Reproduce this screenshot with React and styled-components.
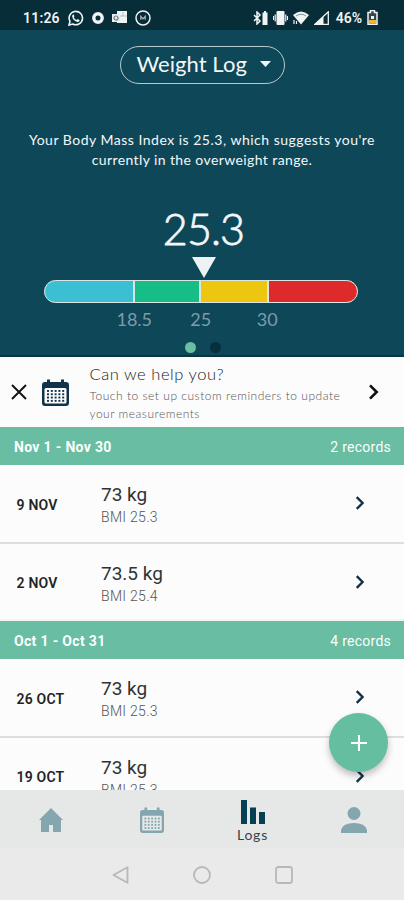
import React from 'react';
import styled, { createGlobalStyle } from 'styled-components';

const GlobalStyle = createGlobalStyle`
  * { box-sizing: border-box; }
  body { margin: 0; background: #fcfcfc; font-family: Roboto, sans-serif; }
  button { font: inherit; color: inherit; background: none; border: 0; padding: 0; }
  svg { display: block; flex: none; }
`;

const Screen = styled.div`
  width: 404px;
  height: 900px;
  display: flex;
  flex-direction: column;
  overflow: hidden;
  position: relative;
  background: #fcfcfc;
`;

const StatusBar = styled.div`
  height: 30px;
  flex: none;
  display: flex;
  align-items: center;
  justify-content: space-between;
  padding: 5px 26px 0 23px;
  background: #062d38;
  color: #f1f4f5;
  font-size: 14px;
  font-weight: 600;
`;

const StatusGroup = styled.div`
  display: flex;
  align-items: center;
  gap: ${(p) => p.$gap}px;
`;

const StatusText = styled.span`
  letter-spacing: ${(p) => p.$spacing || 0}px;
  margin-left: ${(p) => p.$left || 0}px;
  line-height: 16px;
`;

const Hero = styled.header`
  height: 327px;
  flex: none;
  display: flex;
  flex-direction: column;
  align-items: center;
  background: #0e4858;
  border-bottom: 2px solid #073746;
  color: #f4f7f8;
  font-family: Lato, sans-serif;
`;

const LogPicker = styled.button`
  width: 165px;
  height: 38px;
  margin-top: 15.5px;
  padding: 0 13px 2px 16px;
  display: flex;
  align-items: center;
  justify-content: space-between;
  border: 1px solid #b9c9cf;
  border-radius: 19px;
  font-size: 22px;
  letter-spacing: 0.05px;
  line-height: 26px;
  white-space: nowrap;
`;

const Summary = styled.div`
  margin-top: 46.5px;
  font-size: 14px;
  line-height: 20px;
  text-align: center;
  white-space: nowrap;
`;

const SummaryLine = styled.p`
  margin: 0;
  letter-spacing: ${(p) => p.$spacing}px;
`;

const Score = styled.div`
  margin: 32px 0 0 3px;
  height: 54px;
  line-height: 54px;
  font-size: 43px;
  font-weight: 300;
  -webkit-text-stroke: 0.8px currentColor;
  letter-spacing: -0.9px;
`;

const Marker = styled.svg`
  margin: 1px 0 0 4px;
`;

const Gauge = styled.div`
  width: 314px;
  height: 23px;
  margin: 2px 0 0 -3px;
  display: grid;
  grid-template-columns: 88px 64px 66px 1fr;
  gap: 2px;
  overflow: hidden;
  border: 1.5px solid #dbe5e2;
  border-radius: 12px;
  background: #dbe5e2;
`;

const Segment = styled.div`
  background: ${(p) => p.$color};
`;

const Scale = styled.div`
  width: 199px;
  margin: 5px 0 0 -3px;
  display: grid;
  grid-template-columns: repeat(3, 66.5px);
  text-align: center;
  color: #7e9ba8;
  font-size: 18px;
  line-height: 22px;
`;

const Dots = styled.div`
  display: flex;
  gap: 14px;
  margin: 11.5px 0 0 1px;
`;

const Dot = styled.span`
  width: 11px;
  height: 11px;
  border-radius: 50%;
  background: ${(p) => (p.$active ? '#68bfa2' : '#06303c')};
`;

const HelpCard = styled.section`
  height: 70px;
  flex: none;
  display: flex;
  align-items: center;
  padding: 0 24px 0 11px;
`;

const HelpCopy = styled.div`
  margin: 2px 0 0 20.5px;
  flex: 1;
  white-space: nowrap;
  font-family: Lato, sans-serif;
`;

const HelpTitle = styled.h2`
  margin: 0 0 3px;
  font-size: 16.5px;
  line-height: 20px;
  font-weight: 300;
  letter-spacing: 0.55px;
  color: #222;
`;

const HelpText = styled.p`
  margin: 0;
  font-size: 12px;
  line-height: 18px;
  font-weight: 300;
  letter-spacing: 0.52px;
  color: #555;
`;

const Records = styled.main`
  flex: 1;
  min-height: 0;
  overflow: hidden;
`;

const MonthHeader = styled.div`
  height: 38px;
  display: flex;
  align-items: center;
  justify-content: space-between;
  padding: 1px 13px 0 14px;
  background: #68bda2;
  color: #fbfffd;
  font-size: 14px;
`;

const MonthRange = styled.span`
  font-weight: 700;
  letter-spacing: 0.33px;
`;

const RecordCount = styled.span`
  letter-spacing: 0.25px;
`;

const RecordRow = styled.div`
  height: ${(p) => (p.$last ? 77 : 79)}px;
  display: grid;
  grid-template-columns: 84.5px 1fr 11px;
  align-items: center;
  padding: ${(p) => (p.$last ? 2 : 1)}px 38px 0 16.5px;
  border-bottom: 2px solid ${(p) => (p.$last ? '#f0f4f2' : '#dedede')};
  > svg { margin-bottom: 1.5px; }
`;

const RecordDate = styled.div`
  padding-top: 1px;
  font-size: 14px;
  font-weight: 600;
  letter-spacing: 0.2px;
  color: #1f2426;
`;

const Weight = styled.div`
  margin-top: 3px;
  font-size: 19px;
  line-height: 24px;
  color: #303335;
`;

const Bmi = styled.div`
  font-size: 14px;
  line-height: 21px;
  font-weight: 300;
  letter-spacing: 0.3px;
  color: #555;
`;

const TabBar = styled.nav`
  height: 58px;
  flex: none;
  display: grid;
  grid-template-columns: repeat(4, 1fr);
  background: #e6e7e7;
`;

const Tab = styled.button`
  display: flex;
  flex-direction: column;
  align-items: center;
  padding-top: ${(p) => p.$top}px;
  color: ${(p) => (p.$active ? '#073f52' : '#84a7af')};
`;

const TabLabel = styled.span`
  margin-top: 3px;
  font: 400 14px/16px Lato, sans-serif;
  letter-spacing: 0.8px;
  color: #35444a;
`;

const SystemBar = styled.div`
  height: 52px;
  flex: none;
  display: flex;
  align-items: center;
  justify-content: center;
  gap: 64px;
  padding: 2px 0 0;
  background: #eaeaea;
`;

const AddButton = styled.button`
  position: absolute;
  left: 329px;
  top: 713px;
  width: 59px;
  height: 59px;
  display: grid;
  place-items: center;
  border-radius: 50%;
  background: #66bea1;
  box-shadow: 0 4px 7px rgba(0, 0, 0, 0.25);
`;

const Chevron = ({ size = 14, color = '#103047' }) => (
  <svg width={size * 0.75} height={size} viewBox="0 0 9 12" fill="none" stroke={color} strokeWidth="2">
    <path d="M1.5 1l5 5-5 5" />
  </svg>
);

const CalendarIcon = ({ size, width = size, paper }) => (
  <svg width={width} height={size} viewBox="0 0 27 27" preserveAspectRatio="none">
    <path d="M3 3h2V.5h3V3h11V.5h3V3h2q3 0 3 3v18q0 3-3 3H3q-3 0-3-3V6q0-3 3-3z" fill="currentColor" />
    <rect x="2.5" y="9" width="22" height="15.500" rx="1.500" fill={paper} />
    <g fill="currentColor">
      {[11, 14.3, 17.600, 20.900].map((y) =>
        [5, 8.8, 12.600, 16.400, 20.200].map((x) => <rect key={`${x}-${y}`} x={x} y={y} width="2" height="1.900" />)
      )}
    </g>
  </svg>
);

const DarkIcon = styled.div`
  color: #12324a;
  margin: 0 0 0 15px;
`;

const StatusLeftIcons = () => (
  <>
    <svg width="16" height="16" viewBox="0 0 16 16" fill="none" stroke="currentColor">
      <path d="M1 15l1-3.600A6.700 6.700 0 1 1 4.700 14z" strokeWidth="1.600" />
      <path d="M5.400 4.200l1.100 2-.7 1c.6 1.300 1.500 2.200 2.900 2.800l1-.9 2 1.100c-.3 1.600-1.500 2-3 1.500C6.200 10.900 4.500 9 4.200 6.600c-.1-1 .3-2 1.200-2.400z" fill="currentColor" stroke="none" />
    </svg>
    <svg width="12" height="12" viewBox="0 0 12 12"><circle cx="6" cy="6" r="4.200" fill="none" stroke="currentColor" strokeWidth="3.400" /></svg>
    <svg width="15" height="13" viewBox="0 0 15 13">
      <path d="M5 0h10v12H5z" fill="currentColor" />
      <path d="M8 5h7M11 1v4" fill="none" stroke="#b5c0c5" />
      <path d="M0 3h8v8H0z" fill="#e8edef" />
      <circle cx="4" cy="7" r="2" fill="none" stroke="#6d7e86" strokeWidth="1.200" />
    </svg>
    <svg width="16" height="16" viewBox="0 0 16 16" fill="none" stroke="currentColor">
      <circle cx="8" cy="8" r="7" strokeWidth="1.500" />
      <path d="M5.800 9.800V6.300L8 8.800l2.200-2.500v3.500" strokeWidth="1.200" opacity=".7" />
    </svg>
  </>
);

const StatusRightIcons = () => (
  <>
    <svg width="15" height="14" viewBox="0 0 15 14">
      <path d="M1 4l6 6-3 3V1l3 3-6 6" fill="none" stroke="currentColor" strokeWidth="1.500" />
      <path d="M9.500 1.500H11V0h2v1.500h1.500V14h-5z" fill="currentColor" />
    </svg>
    <svg width="15" height="14" viewBox="0 0 15 14" fill="currentColor">
      <rect x="3.500" y="0" width="8" height="14" rx="1" />
      <path d="M0 5h1v4H0zM1.600 3.500h1.200v7H1.600zM12.200 3.500h1.200v7h-1.200zM14 5h1v4h-1z" />
    </svg>
    <svg width="16" height="14" viewBox="0 0 16 14">
      <path d="M0 4q8-7 16 0L8 13.500z" fill="currentColor" />
      <path d="M3 5q5-3.500 10 0" stroke="#062d38" fill="none" opacity=".5" />
      <path d="M1 9v4M3.500 10v3" stroke="currentColor" strokeWidth="1.200" />
    </svg>
    <svg width="15" height="14" viewBox="0 0 15 14">
      <path d="M1 13.300L14.300.8v12.500z" fill="none" stroke="currentColor" strokeWidth="1.300" />
      <path d="M1 13.300L9.500 5.500v7.800z" fill="currentColor" />
    </svg>
  </>
);

const Row = ({ date, weight, bmi, last }) => (
  <RecordRow $last={last}>
    <RecordDate>{date}</RecordDate>
    <div>
      <Weight>{weight}</Weight>
      <Bmi>BMI {bmi}</Bmi>
    </div>
    <Chevron />
  </RecordRow>
);

const months = [
  { range: 'Nov 1 - Nov 30', count: 2, rows: [['9 NOV', '73 kg', '25.3'], ['2 NOV', '73.5 kg', '25.4']] },
  { range: 'Oct 1 - Oct 31', count: 4, rows: [['26 OCT', '73 kg', '25.3'], ['19 OCT', '73 kg', '25.3']] },
];

export default function App() {
  return (
    <Screen>
      <GlobalStyle />
      <StatusBar>
        <StatusGroup $gap={8}>
          <StatusText $spacing={0.2}>11:26</StatusText>
          <StatusLeftIcons />
        </StatusGroup>
        <StatusGroup $gap={5}>
          <StatusRightIcons />
          <StatusText $left={2}>46%</StatusText>
          <svg width="11" height="15" viewBox="0 0 11 15">
            <path d="M1 2.500h2.500v-2h4v2H10v11.700H1z" fill="#35454b" stroke="currentColor" strokeWidth="1.500" />
            <path d="M2 10h7v3.500H2z" fill="#eeb82c" />
            <path d="M4 6h3v3H4z" fill="currentColor" />
          </svg>
        </StatusGroup>
      </StatusBar>

      <Hero>
        <LogPicker>
          Weight Log
          <svg width="11" height="6" viewBox="0 0 11 6"><path d="M0 0h11L5.500 6z" fill="currentColor" /></svg>
        </LogPicker>
        <Summary>
          <SummaryLine $spacing={0.5}>Your Body Mass Index is 25.3, which suggests you're</SummaryLine>
          <SummaryLine $spacing={0.4}>currently in the overweight range.</SummaryLine>
        </Summary>
        <Score>25.3</Score>
        <Marker width="24" height="21" viewBox="0 0 24 21"><path d="M0 0h24L12 21z" fill="#edf2f3" /></Marker>
        <Gauge>
          <Segment $color="#3bbfd3" />
          <Segment $color="#17bd86" />
          <Segment $color="#edc70f" />
          <Segment $color="#df2a2b" />
        </Gauge>
        <Scale><span>18.5</span><span>25</span><span>30</span></Scale>
        <Dots><Dot $active /><Dot /></Dots>
      </Hero>

      <HelpCard>
        <svg width="16" height="16" viewBox="0 0 16 16" stroke="#111" strokeWidth="1.900"><path d="M1 1l14 14M15 1L1 15" /></svg>
        <DarkIcon><CalendarIcon size={27} paper="#fcfcfc" /></DarkIcon>
        <HelpCopy>
          <HelpTitle>Can we help you?</HelpTitle>
          <HelpText>Touch to set up custom reminders to update<br />your measurements</HelpText>
        </HelpCopy>
        <Chevron size={16} color="#111" />
      </HelpCard>

      <Records>
        {months.map((m) => (
          <section key={m.range}>
            <MonthHeader><MonthRange>{m.range}</MonthRange><RecordCount>{m.count} records</RecordCount></MonthHeader>
            {m.rows.map(([date, weight, bmi], i) => (
              <Row key={date} date={date} weight={weight} bmi={bmi} last={i === m.rows.length - 1} />
            ))}
          </section>
        ))}
      </Records>

      <TabBar>
        <Tab $top={18}>
          <svg width="24" height="24" viewBox="0 0 24 24"><path d="M12 0L24 12h-2v12h-8v-7h-4v7H2V12H0z" fill="currentColor" /></svg>
        </Tab>
        <Tab $top={17}><CalendarIcon size={26} width={24} paper="#e6e7e7" /></Tab>
        <Tab $active $top={10}>
          <svg width="24" height="24" viewBox="0 0 24 24" fill="currentColor"><path d="M0 0h6v24H0zM9 7.500h6V24H9zM18 12h6v12h-6z" /></svg>
          <TabLabel>Logs</TabLabel>
        </Tab>
        <Tab $top={17}>
          <svg width="26" height="26" viewBox="0 0 26 26" fill="currentColor"><circle cx="13" cy="6.500" r="6.500" /><path d="M0 26v-3q2-7 13-7t13 7v3z" /></svg>
        </Tab>
      </TabBar>

      <SystemBar>
        <svg width="17" height="18" viewBox="0 0 17 18" fill="none" stroke="#b8b8b8" strokeWidth="1.800" strokeLinejoin="round"><path d="M1.500 9L15.500 1.200v15.600z" /></svg>
        <svg width="18" height="18" viewBox="0 0 18 18" fill="none" stroke="#b8b8b8" strokeWidth="1.800"><circle cx="9" cy="9" r="8" /></svg>
        <svg width="18" height="18" viewBox="0 0 18 18" fill="none" stroke="#b8b8b8" strokeWidth="1.800"><rect x="1" y="1" width="16" height="16" rx="2.500" /></svg>
      </SystemBar>

      <AddButton aria-label="Add">
        <svg width="16" height="16" viewBox="0 0 16 16" stroke="#fff" strokeWidth="2"><path d="M8 0v16M0 8h16" /></svg>
      </AddButton>
    </Screen>
  );
}
